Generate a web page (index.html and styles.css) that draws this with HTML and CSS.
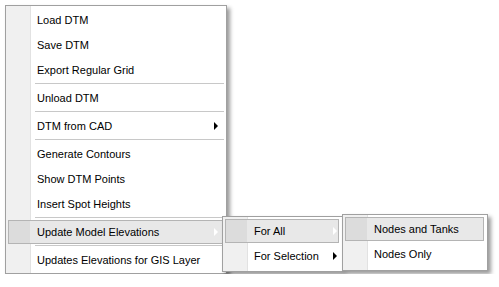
FILE: index.html
```html
<!DOCTYPE html>
<html lang="en">

<head>
  <meta charset="UTF-8" />
  <title>DTM menu</title>
  <link rel="stylesheet" href="styles.css">
</head>

<body>
  <!-- main context menu -->
  <div class="menu main">
    <div class="item">Load DTM</div>
    <div class="item">Save DTM</div>
    <div class="item">Export Regular Grid</div>
    <div class="sep"></div>
    <div class="item">Unload DTM</div>
    <div class="sep"></div>
    <div class="item has-sub">DTM from CAD<span class="arrow"></span></div>
    <div class="sep"></div>
    <div class="item">Generate Contours</div>
    <div class="item">Show DTM Points</div>
    <div class="item">Insert Spot Heights</div>
    <div class="sep"></div>
    <div class="item has-sub on">Update Model Elevations<span class="arrow"></span>
      <!-- first submenu -->
      <div class="menu sub1">
        <div class="item has-sub on">For All<span class="arrow"></span>
          <!-- second submenu -->
          <div class="menu sub2">
            <div class="item on">Nodes and Tanks</div>
            <div class="item">Nodes Only</div>
          </div>
        </div>
        <div class="item has-sub">For Selection<span class="arrow"></span></div>
      </div>
    </div>
    <div class="sep"></div>
    <div class="item">Updates Elevations for GIS Layer</div>
  </div>
</body>

</html>
```

FILE: styles.css
```css
body {
  margin: 0;
  background: #fff;
  font-family: "Liberation Sans", Arial, sans-serif;
  font-size: 11px;
  color: #000;
}

/* menu box with gutter on the left */
.menu {
  box-sizing: border-box;
  border: 1px solid #a0a0a0;
  padding: 1px 0;
  background: linear-gradient(to right, #f0f0f0 0, #f0f0f0 24px, #e2e2e2 24px, #e2e2e2 25px, #fff 25px);
  box-shadow: 3px 3px 4px rgba(0, 0, 0, 0.4);
}

.main {
  width: 222px;
  margin: 5px 0 0 5px;
}

.item {
  position: relative;
  height: 24px;
  line-height: 24px;
  margin: 1px 3px 0 2px;
  padding-left: 29px;
  box-sizing: border-box;
  white-space: nowrap;
}

/* highlighted (hover) item */
.item.on {
  border: 1px solid #b4b4b4;
  padding-left: 28px;
  line-height: 22px;
  background: linear-gradient(to right, #dcdcdc 0, #dcdcdc 21px, #e8e8e8 21px);
}

.sep {
  height: 3px;
  margin: 0 2px 0 29px;
  background: linear-gradient(#fff 1px, #c8c8c8 1px, #c8c8c8 2px, #fff 2px);
}

/* submenu arrow */
.arrow {
  position: absolute;
  right: 5px;
  top: 8px;
  width: 0;
  height: 0;
  border-left: 4px solid #000;
  border-top: 4px solid transparent;
  border-bottom: 4px solid transparent;
}

.item.on > .arrow {
  top: 7px;
  right: 4px;
  border-left-color: #fff;
}

.sub1 {
  position: absolute;
  top: -5px;
  left: 213px;
  width: 121px;
  padding-bottom: 3px;
  z-index: 2;
}

.sub1 .arrow {
  right: 2px;
}

.sub1 .item.on > .arrow {
  right: 1px;
}

.sub2 {
  position: absolute;
  top: -6px;
  left: 116px;
  width: 146px;
  padding-bottom: 4px;
  z-index: 3;
}
```
